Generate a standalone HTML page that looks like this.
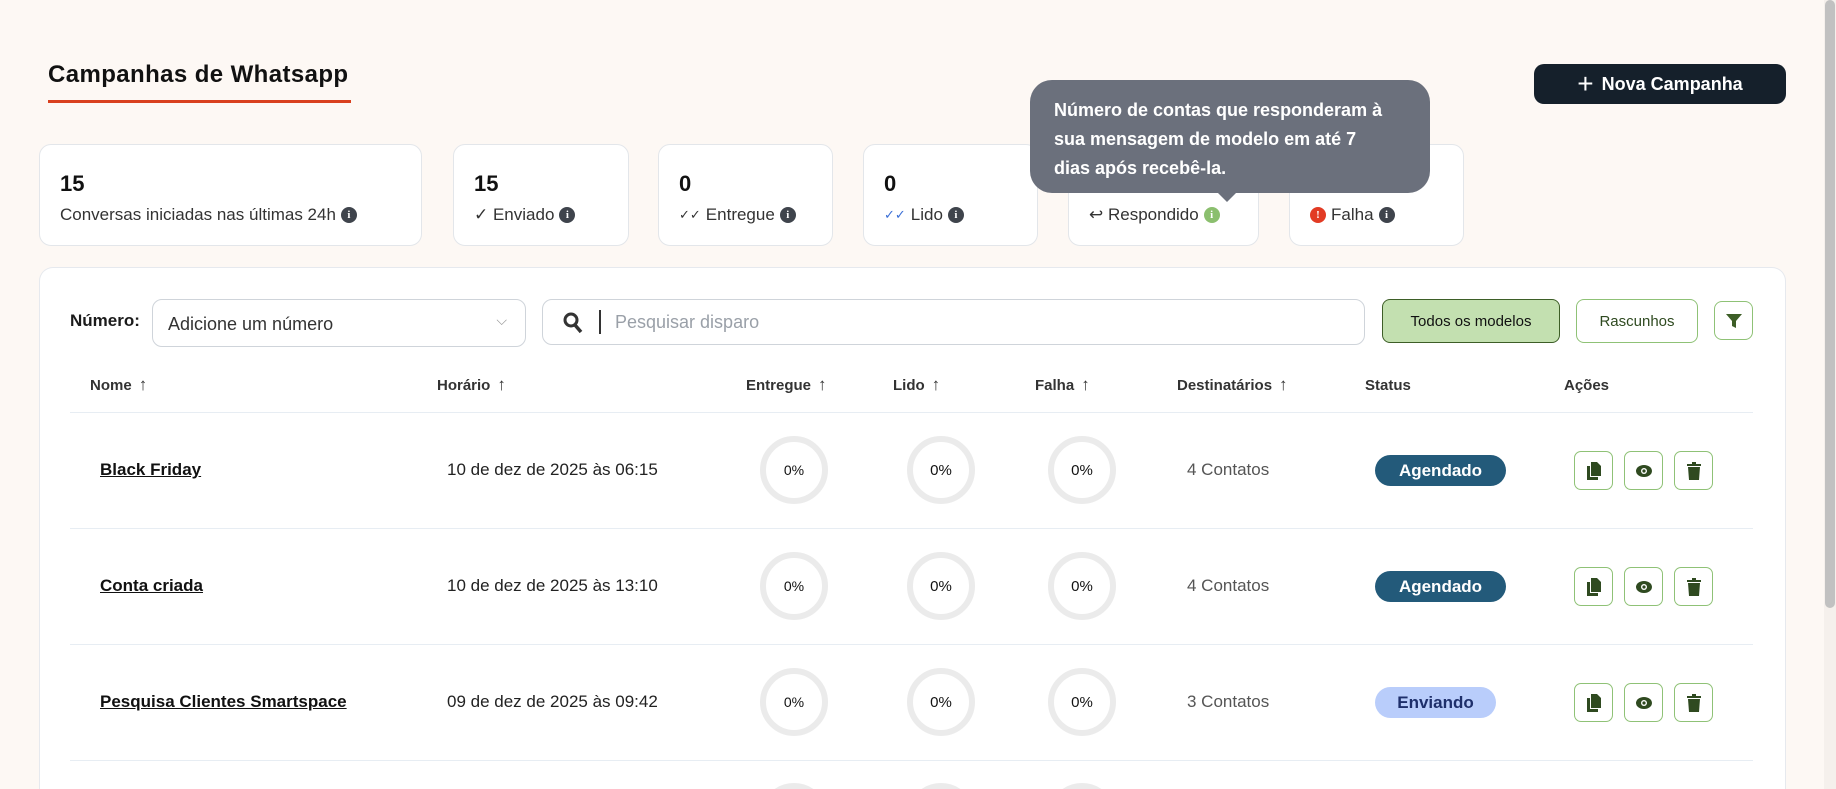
<!DOCTYPE html>
<html style="width:1836px;height:789px;overflow:hidden"><head><meta charset="utf-8"><style>
*{box-sizing:border-box;margin:0;padding:0}
body{width:1836px;height:789px;overflow:hidden;background:#fdf8f4;font-family:"Liberation Sans",sans-serif;color:#1b1b1b}
#wrap{position:relative;width:1836px;height:789px;overflow:hidden}
.abs{position:absolute}
.title{left:48px;top:61px;font-size:24px;font-weight:bold;color:#111;letter-spacing:0.4px}
.uline{left:48px;top:100px;width:303px;height:3px;background:#d9401f}
.btn{left:1534px;top:64px;width:252px;height:40px;background:#15202b;border-radius:10px;color:#fff;font-weight:bold;font-size:18px;display:flex;align-items:center;justify-content:center;gap:8px}
.card{top:144px;height:102px;background:#fff;border:1px solid #e3e6ea;border-radius:12px;padding:26px 0 0 20px}
.card .n{font-size:22px;font-weight:bold;color:#111}
.card .l{margin-top:8px;font-size:17px;color:#333;display:flex;align-items:center;gap:5px}
.i{display:inline-block;width:16px;height:16px;border-radius:50%;background:#3f444c;color:#fff;font-size:11px;font-weight:bold;text-align:center;line-height:16px;font-family:"Liberation Serif",serif}
.tip{left:1030px;top:80px;width:400px;height:113px;background:#6b707c;border-radius:22px;color:#fff;font-size:18px;font-weight:bold;line-height:29px;padding:16px 24px 0}
.tip:after{content:"";position:absolute;left:188px;bottom:-9px;border:9px solid transparent;border-bottom:0;border-top-color:#6b707c}
.panel{left:39px;top:267px;width:1747px;height:522px;background:#fff;border:1px solid #e6e9ee;border-bottom:0;border-radius:14px 14px 0 0}
.inp{border:1px solid #cfd4da;border-radius:10px;background:#fff}
.th{top:377px;font-size:15px;font-weight:bold;color:#333;line-height:18px}
.th b{font-size:17px;margin-left:7px;vertical-align:top;line-height:16px}
.hr{left:70px;width:1683px;height:1px;background:#e7edf3}
.name{left:100px;font-size:17px;font-weight:bold;text-decoration:underline;color:#111}
.date{left:447px;font-size:17px;color:#222}
.circ{width:68px;height:68px;border:6px solid #ebebeb;border-radius:50%;display:flex;align-items:center;justify-content:center;font-size:15px;color:#111}
.cont{left:1187px;font-size:17px;color:#555}
.badge{left:1375px;height:31px;border-radius:16px;font-weight:bold;font-size:17px;display:flex;align-items:center;justify-content:center}
.ab{width:39px;height:39px;border:1px solid #8fc276;border-radius:7px;display:flex;align-items:center;justify-content:center;background:#fff}
.clip{top:783px;height:6px;width:70px;overflow:hidden}
</style></head><body><div id="wrap">
<div class="abs title">Campanhas de Whatsapp</div>
<div class="abs uline"></div>
<div class="abs btn"><span style="font-size:28px;font-weight:normal;line-height:1">+</span>Nova Campanha</div>

<div class="abs card" style="left:39px;width:383px"><div class="n">15</div><div class="l">Conversas iniciadas nas últimas 24h <span class="i">i</span></div></div>
<div class="abs card" style="left:453px;width:176px"><div class="n">15</div><div class="l">✓ Enviado <span class="i">i</span></div></div>
<div class="abs card" style="left:658px;width:175px"><div class="n">0</div><div class="l"><span style="font-size:13px">✓✓</span> Entregue <span class="i">i</span></div></div>
<div class="abs card" style="left:863px;width:175px"><div class="n">0</div><div class="l"><span style="font-size:13px;color:#3b6fd6">✓✓</span> Lido <span class="i">i</span></div></div>
<div class="abs card" style="left:1068px;width:191px"><div class="n">0</div><div class="l">↩ Respondido <span class="i" style="background:#8bbf6e">i</span></div></div>
<div class="abs card" style="left:1289px;width:175px"><div class="n">0</div><div class="l"><span class="i" style="background:#e23b24">!</span> Falha <span class="i">i</span></div></div>
<div class="abs tip">Número de contas que responderam à<br>sua mensagem de modelo em até 7<br>dias após recebê-la.</div>

<div class="abs panel"></div>
<div class="abs" style="left:70px;top:311px;font-size:17px;font-weight:bold">Número:</div>
<div class="abs inp" style="left:152px;top:299px;width:374px;height:48px;padding:14px 15px;font-size:18px;color:#333">Adicione um número<span style="position:absolute;right:18px;top:12px;color:#999;font-size:14px">⌵</span></div>
<div class="abs inp" style="left:542px;top:299px;width:823px;height:46px;font-size:18px;color:#9aa0a8;padding:12px 0 0 72px">Pesquisar disparo
<svg style="position:absolute;left:20px;top:12px" width="20" height="22" viewBox="0 0 20 22"><circle cx="8" cy="8" r="6" stroke="#333" stroke-width="3" fill="none"/><path d="M12 13l6 7" stroke="#333" stroke-width="3.5"/></svg>
<span style="position:absolute;left:56px;top:10px;width:2px;height:24px;background:#333"></span></div>
<div class="abs" style="left:1382px;top:299px;width:178px;height:44px;background:#c3e0b0;border:1px solid #3d5e27;border-radius:8px;font-size:15px;display:flex;align-items:center;justify-content:center;color:#111">Todos os modelos</div>
<div class="abs" style="left:1576px;top:299px;width:122px;height:44px;border:1px solid #8fc276;border-radius:8px;font-size:15px;display:flex;align-items:center;justify-content:center;color:#2f4a20;background:#fff">Rascunhos</div>
<div class="abs" style="left:1714px;top:301px;width:39px;height:39px;border:1px solid #8fc276;border-radius:8px;display:flex;align-items:center;justify-content:center;background:#fff"><svg width="16" height="16" viewBox="0 0 16 16"><path d="M0 1h16l-6 7v7l-4-2V8z" fill="#3d5e27"/></svg></div>

<div class="abs th" style="left:90px">Nome<b>↑</b></div>
<div class="abs th" style="left:437px">Horário<b>↑</b></div>
<div class="abs th" style="left:746px">Entregue<b>↑</b></div>
<div class="abs th" style="left:893px">Lido<b>↑</b></div>
<div class="abs th" style="left:1035px">Falha<b>↑</b></div>
<div class="abs th" style="left:1177px">Destinatários<b>↑</b></div>
<div class="abs th" style="left:1365px">Status</div>
<div class="abs th" style="left:1564px">Ações</div>
<div class="abs hr" style="top:412px"></div>
<div class="abs hr" style="top:528px"></div>
<div class="abs hr" style="top:644px"></div>
<div class="abs hr" style="top:760px"></div>

<div class="abs name" style="top:460px">Black Friday</div>
<div class="abs date" style="top:460px">10 de dez de 2025 às 06:15</div>
<div class="abs circ" style="left:760px;top:436px;font-size:14px">0%</div>
<div class="abs circ" style="left:907px;top:436px">0%</div>
<div class="abs circ" style="left:1048px;top:436px">0%</div>
<div class="abs cont" style="top:460px">4 Contatos</div>
<div class="abs badge" style="top:455px;width:131px;background:#235a7a;color:#fff">Agendado</div>

<div class="abs name" style="top:576px">Conta criada</div>
<div class="abs date" style="top:576px">10 de dez de 2025 às 13:10</div>
<div class="abs circ" style="left:760px;top:552px;font-size:14px">0%</div>
<div class="abs circ" style="left:907px;top:552px">0%</div>
<div class="abs circ" style="left:1048px;top:552px">0%</div>
<div class="abs cont" style="top:576px">4 Contatos</div>
<div class="abs badge" style="top:571px;width:131px;background:#235a7a;color:#fff">Agendado</div>

<div class="abs name" style="top:692px">Pesquisa Clientes Smartspace</div>
<div class="abs date" style="top:692px">09 de dez de 2025 às 09:42</div>
<div class="abs circ" style="left:760px;top:668px;font-size:14px">0%</div>
<div class="abs circ" style="left:907px;top:668px">0%</div>
<div class="abs circ" style="left:1048px;top:668px">0%</div>
<div class="abs cont" style="top:692px">3 Contatos</div>
<div class="abs badge" style="top:687px;width:121px;background:#b9cdfb;color:#1e2f6b">Enviando</div>

<div class="abs clip" style="left:760px"><div class="circ"></div></div>
<div class="abs clip" style="left:907px"><div class="circ"></div></div>
<div class="abs clip" style="left:1048px"><div class="circ"></div></div>

<div class="abs" style="left:1574px;top:451px;display:flex;gap:11px">
<div class="ab"><svg width="14" height="18" viewBox="0 0 14 18"><path d="M4 0h6l4 4v10H4z M0 4h3v11h8v3H0z" fill="#2f4a20"/></svg></div>
<div class="ab"><svg width="18" height="14" viewBox="0 0 18 14"><ellipse cx="9" cy="7" rx="8" ry="6" fill="#2f4a20"/><circle cx="9" cy="7" r="3" fill="#fff"/><circle cx="9" cy="7" r="1.6" fill="#2f4a20"/></svg></div>
<div class="ab"><svg width="14" height="18" viewBox="0 0 14 18"><path d="M0 2h14v2H0z M5 0h4v2H5z M1 5h12l-1 13H2z" fill="#2f4a20"/></svg></div></div>
<div class="abs" style="left:1574px;top:567px;display:flex;gap:11px">
<div class="ab"><svg width="14" height="18" viewBox="0 0 14 18"><path d="M4 0h6l4 4v10H4z M0 4h3v11h8v3H0z" fill="#2f4a20"/></svg></div>
<div class="ab"><svg width="18" height="14" viewBox="0 0 18 14"><ellipse cx="9" cy="7" rx="8" ry="6" fill="#2f4a20"/><circle cx="9" cy="7" r="3" fill="#fff"/><circle cx="9" cy="7" r="1.6" fill="#2f4a20"/></svg></div>
<div class="ab"><svg width="14" height="18" viewBox="0 0 14 18"><path d="M0 2h14v2H0z M5 0h4v2H5z M1 5h12l-1 13H2z" fill="#2f4a20"/></svg></div></div>
<div class="abs" style="left:1574px;top:683px;display:flex;gap:11px">
<div class="ab"><svg width="14" height="18" viewBox="0 0 14 18"><path d="M4 0h6l4 4v10H4z M0 4h3v11h8v3H0z" fill="#2f4a20"/></svg></div>
<div class="ab"><svg width="18" height="14" viewBox="0 0 18 14"><ellipse cx="9" cy="7" rx="8" ry="6" fill="#2f4a20"/><circle cx="9" cy="7" r="3" fill="#fff"/><circle cx="9" cy="7" r="1.6" fill="#2f4a20"/></svg></div>
<div class="ab"><svg width="14" height="18" viewBox="0 0 14 18"><path d="M0 2h14v2H0z M5 0h4v2H5z M1 5h12l-1 13H2z" fill="#2f4a20"/></svg></div></div>

<div class="abs" style="left:1824px;top:0;width:12px;height:789px;background:#f5f0ec"></div>
<div class="abs" style="left:1825px;top:0;width:10px;height:608px;background:#c1c1c1;border-radius:5px"></div>
</div></body></html>
